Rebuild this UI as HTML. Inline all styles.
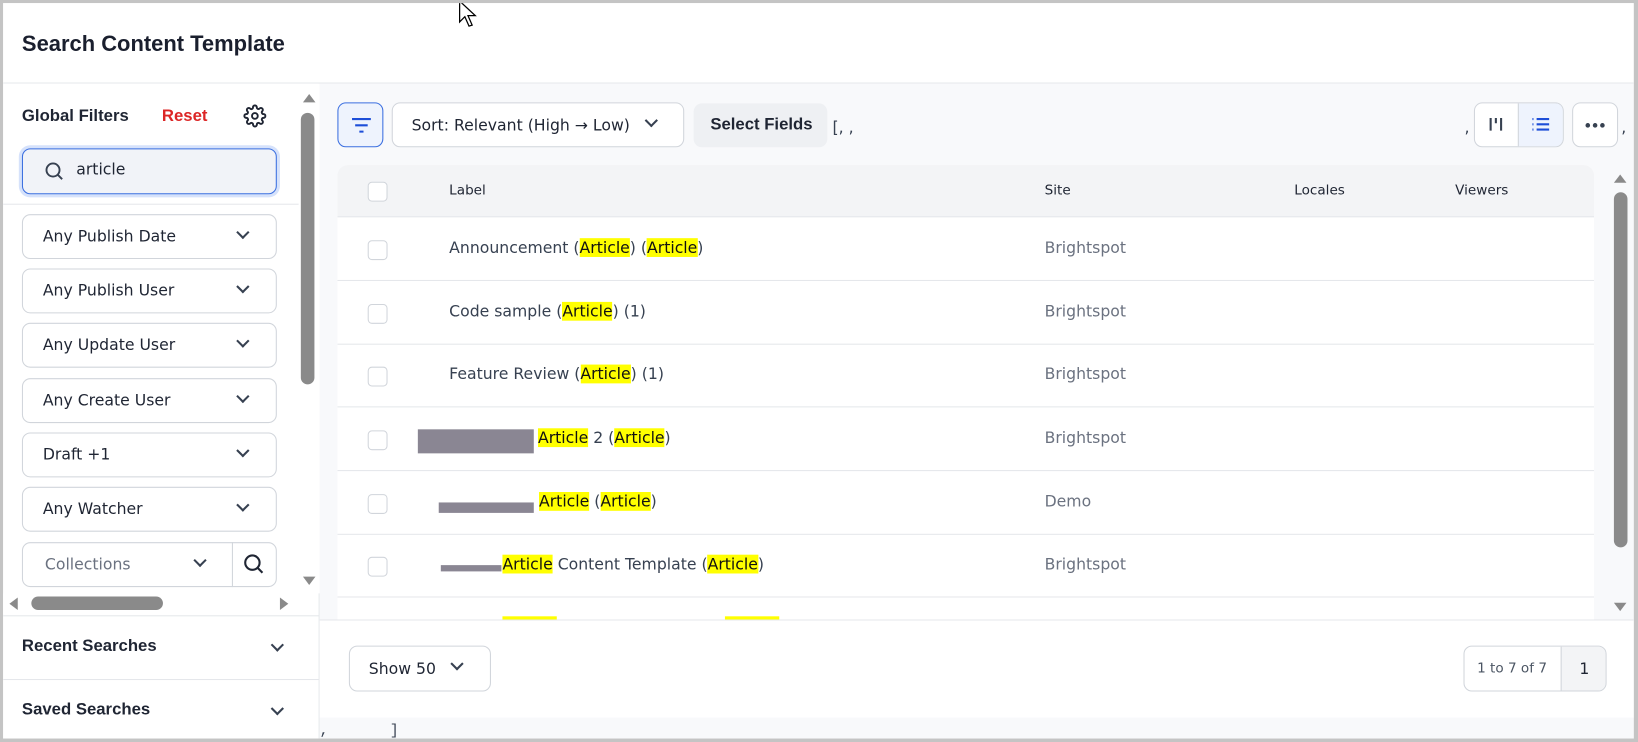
<!DOCTYPE html>
<html><head><meta charset="utf-8"><style>
*{box-sizing:border-box;margin:0;padding:0}
body{width:1638px;height:742px;background:#c4c4c4;font-family:"DejaVu Sans","Liberation Sans",sans-serif;color:#1f2533;position:relative;overflow:hidden}
.wrap{position:absolute;left:0;top:0;width:1568px;height:710px;transform:scale(1.0446);transform-origin:0 0}
.frame{position:absolute;left:3px;top:3px;width:1561px;height:704px;background:#fff;overflow:hidden}
.abs{position:absolute}
.b{font-family:"Liberation Sans",sans-serif;font-weight:bold;font-size:16px}
.hdr{left:0;top:0;width:100%;height:77px;border-bottom:1px solid #e5e7eb;background:#fff}
.hdr h1{position:absolute;left:18px;top:28px;font-size:21px;font-weight:bold;color:#1a1f2e;font-family:"Liberation Sans",sans-serif}
.side{left:0;top:77px;width:303px;height:627px;background:#fff;border-right:1px solid #e5e7eb}
.sel{position:absolute;left:18px;width:244px;height:43px;border:1px solid #d1d5db;border-radius:8px;font-size:15px;color:#1f2533;padding:11px 0 0 19px;background:#fff}
.chev{position:absolute;width:9px;height:9px;border-right:2px solid #374151;border-bottom:2px solid #374151;transform:rotate(45deg)}
.main{left:303px;top:77px;width:1258px;height:627px;background:#f8f9fb}
.btn{position:absolute;border:1px solid #d1d5db;border-radius:8px;background:#fff}
.card{left:320px;top:155px;width:1203px;height:435px;background:#fff;border-radius:10px 10px 0 0;overflow:hidden}
.th{position:absolute;left:0;top:0;width:100%;height:50px;background:#f3f4f6;border-bottom:1px solid #e5e7eb;font-size:13px;color:#1f2533}
.row{position:absolute;left:0;width:100%;height:61px;border-bottom:1px solid #e5e7eb;font-size:15px;color:#374151}
.cb{position:absolute;left:29px;width:19px;height:19px;border:1px solid #d1d5db;border-radius:4px;background:#fff}
.hl{background:#ffff00;color:#111}
.site{position:absolute;left:677px;top:20px;color:#6b7280;font-size:15px}
.lbl{position:absolute;top:20px}
.grey{position:absolute;background:#8a8693}
</style></head><body>
<div class="wrap">
<div class="frame">
<div class="abs hdr"><h1>Search Content Template</h1></div>
<svg class="abs" style="left:436px;top:-3px" width="20" height="28" viewBox="0 0 20 28"><path d="M1 1 L1 21 L6 16 L10 25 L13 24 L9 15 L16 15 Z" fill="#fff" stroke="#000" stroke-width="1.2"/></svg>

<div class="abs side">
 <div class="abs b" style="left:18px;top:23px">Global Filters</div>
 <div class="abs b" style="left:152px;top:23px;color:#dc2626">Reset</div>
 <svg class="abs" style="left:230px;top:20px" width="22" height="22" viewBox="0 0 24 24" fill="none" stroke="#1f2533" stroke-width="2"><circle cx="12" cy="12" r="3"/><path d="M19.4 15a1.650 1.650 0 0 0 .33 1.820l.06.06a2 2 0 1 1-2.830 2.830l-.06-.06a1.650 1.650 0 0 0-1.820-.33 1.650 1.650 0 0 0-1 1.510V21a2 2 0 1 1-4 0v-.09A1.650 1.650 0 0 0 9 19.4a1.650 1.650 0 0 0-1.820.33l-.06.06a2 2 0 1 1-2.830-2.830l.06-.06A1.650 1.650 0 0 0 4.680 15a1.650 1.650 0 0 0-1.510-1H3a2 2 0 1 1 0-4h.09A1.650 1.650 0 0 0 4.600 9a1.650 1.650 0 0 0-.33-1.820l-.06-.06a2 2 0 1 1 2.830-2.830l.06.06A1.650 1.650 0 0 0 9 4.680 1.650 1.650 0 0 0 10 3.170V3a2 2 0 1 1 4 0v.09a1.650 1.650 0 0 0 1 1.510 1.650 1.650 0 0 0 1.820-.33l.06-.06a2 2 0 1 1 2.830 2.830l-.06.06A1.650 1.650 0 0 0 19.4 9a1.650 1.650 0 0 0 1.510 1H21a2 2 0 1 1 0 4h-.09a1.650 1.650 0 0 0-1.510 1z"/></svg>
 <div class="abs" style="left:18px;top:62px;width:244px;height:44px;border:1px solid #3b6fe0;border-radius:8px;background:#f1f3f8;box-shadow:0 0 0 3px #d6e2fb"></div>
 <svg class="abs" style="left:39px;top:74px" width="20" height="20" viewBox="0 0 24 24" fill="none" stroke="#374151" stroke-width="2.2"><circle cx="10.5" cy="10.5" r="7.5"/><path d="M16 16l5 5"/></svg>
 <div class="abs" style="left:70px;top:73px;font-size:15px">article</div>
 <div class="abs" style="left:0;top:115px;width:283px;height:1px;background:#e5e7eb"></div>
 <div class="sel" style="top:125px">Any Publish Date<span class="chev" style="left:206px;top:12px"></span></div>
 <div class="sel" style="top:177px">Any Publish User<span class="chev" style="left:206px;top:12px"></span></div>
 <div class="sel" style="top:229px">Any Update User<span class="chev" style="left:206px;top:12px"></span></div>
 <div class="sel" style="top:282px">Any Create User<span class="chev" style="left:206px;top:12px"></span></div>
 <div class="sel" style="top:334px">Draft +1<span class="chev" style="left:206px;top:12px"></span></div>
 <div class="sel" style="top:386px">Any Watcher<span class="chev" style="left:206px;top:12px"></span></div>
 <div class="sel" style="top:439px;color:#6b7280;padding-left:21px">Collections<span class="chev" style="left:165px;top:12px"></span><span style="position:absolute;left:200px;top:-1px;width:1px;height:43px;background:#d1d5db"></span>
  <svg style="position:absolute;left:210px;top:9px" width="22" height="22" viewBox="0 0 24 24" fill="none" stroke="#1f2533" stroke-width="2.2"><circle cx="10.5" cy="10.5" r="7.5"/><path d="M16 16l5 5"/></svg></div>
 <div class="abs" style="left:283px;top:0;width:20px;height:488px;background:#fff"></div>
 <div class="abs" style="left:287px;top:10px;width:0;height:0;border-left:6px solid transparent;border-right:6px solid transparent;border-bottom:8px solid #8a8a8a"></div>
 <div class="abs" style="left:285px;top:28px;width:13px;height:260px;background:#8a8a8a;border-radius:7px"></div>
 <div class="abs" style="left:287px;top:472px;width:0;height:0;border-left:6px solid transparent;border-right:6px solid transparent;border-top:8px solid #8a8a8a"></div>
 <div class="abs" style="left:0;top:488px;width:283px;height:20px;background:#fff"></div>
 <div class="abs" style="left:6px;top:492px;width:0;height:0;border-top:6px solid transparent;border-bottom:6px solid transparent;border-right:8px solid #8a8a8a"></div>
 <div class="abs" style="left:27px;top:491px;width:126px;height:13px;background:#8a8a8a;border-radius:7px"></div>
 <div class="abs" style="left:265px;top:492px;width:0;height:0;border-top:6px solid transparent;border-bottom:6px solid transparent;border-left:8px solid #8a8a8a"></div>
 <div class="abs" style="left:0;top:509px;width:303px;height:1px;background:#e5e7eb"></div>
 <div class="abs b" style="left:18px;top:530px">Recent Searches</div>
 <span class="chev abs" style="left:258px;top:533px"></span>
 <div class="abs" style="left:0;top:570px;width:303px;height:1px;background:#e5e7eb"></div>
 <div class="abs b" style="left:18px;top:591px">Saved Searches</div>
 <span class="chev abs" style="left:258px;top:594px"></span>
</div>

<div class="abs main">
 <div class="btn" style="left:17px;top:18px;width:44px;height:43px;border-color:#3b6fe0;background:#eef3fd"></div>
 <svg class="abs" style="left:30px;top:32px" width="20" height="16" viewBox="0 0 20 16" stroke="#1d4ed8" stroke-width="2"><path d="M1 2h18M4 8h12M8 14h4"/></svg>
 <div class="btn" style="left:69px;top:18px;width:280px;height:43px;font-size:15px;padding:12px 0 0 18px">Sort: Relevant (High → Low)<span class="chev" style="left:243px;top:12px"></span></div>
 <div class="abs b" style="left:358px;top:19px;width:128px;height:42px;background:#eef0f3;border-radius:8px;padding:12px 0 0 16px;color:#1f2533">Select Fields</div>
 <div class="abs" style="left:491px;top:33px;font-size:15px;color:#374151">[, ,</div>
 <div class="abs" style="left:1096px;top:33px;font-size:15px;color:#374151">,</div>
 <div class="btn" style="left:1105px;top:18px;width:86px;height:43px;overflow:hidden"><div style="position:absolute;left:41px;top:0;width:44px;height:43px;background:#eef3fd;border-left:1px solid #d1d5db"></div></div>
 <svg class="abs" style="left:1118px;top:31px" width="16" height="16" viewBox="0 0 16 16" stroke="#374151" stroke-width="2"><path d="M3 2v12M8 2v5M13 2v12"/></svg>
 <svg class="abs" style="left:1160px;top:31px" width="18" height="16" viewBox="0 0 18 16" stroke="#1d4ed8" stroke-width="2"><path d="M1 3h1M5 3h12M1 8h1M5 8h12M1 13h1M5 13h12"/></svg>
 <div class="btn" style="left:1199px;top:18px;width:44px;height:43px"></div>
 <svg class="abs" style="left:1211px;top:37px" width="20" height="6" viewBox="0 0 20 6" fill="#374151"><circle cx="3" cy="3" r="2.2"/><circle cx="10" cy="3" r="2.2"/><circle cx="17" cy="3" r="2.2"/></svg>
 <div class="abs" style="left:1246px;top:33px;font-size:15px;color:#374151">,</div>
 <div class="abs" style="left:1239px;top:87px;width:0;height:0;border-left:6px solid transparent;border-right:6px solid transparent;border-bottom:8px solid #8a8a8a"></div>
 <div class="abs" style="left:1239px;top:104px;width:13px;height:340px;background:#8a8a8a;border-radius:7px"></div>
 <div class="abs" style="left:1239px;top:497px;width:0;height:0;border-left:6px solid transparent;border-right:6px solid transparent;border-top:8px solid #8a8a8a"></div>
 <div class="abs" style="left:0;top:513px;width:1258px;height:94px;background:#fff;border-top:1px solid #e5e7eb"></div>
 <div class="btn" style="left:28px;top:538px;width:136px;height:44px;font-size:15px;padding:12px 0 0 18px">Show 50<span class="chev" style="left:98px;top:12px"></span></div>
 <div class="btn" style="left:1095px;top:538px;width:137px;height:44px;overflow:hidden;font-size:13px;color:#4b5563"><span style="position:absolute;left:12px;top:14px">1 to 7 of 7</span><div style="position:absolute;left:92px;top:0;width:45px;height:44px;background:#f3f4f6;border-left:1px solid #d1d5db;font-size:15px;color:#1f2533;padding:12px 0 0 17px">1</div></div>
 <div class="abs" style="left:0;top:612px;font-size:14px;color:#374151;font-family:'Liberation Mono',monospace">,&nbsp;&nbsp;&nbsp;&nbsp;&nbsp;&nbsp;&nbsp;]</div>
</div>

<div class="abs card">
 <div class="th"><span class="cb" style="top:16px"></span>
  <span class="abs" style="left:107px;top:17px">Label</span><span class="abs" style="left:677px;top:17px">Site</span><span class="abs" style="left:916px;top:17px">Locales</span><span class="abs" style="left:1070px;top:17px">Viewers</span></div>
 <div class="row" style="top:50px"><span class="cb" style="top:22px"></span><span class="lbl" style="left:107px">Announcement (<span class="hl">Article</span>) (<span class="hl">Article</span>)</span><span class="site">Brightspot</span></div>
 <div class="row" style="top:111px"><span class="cb" style="top:22px"></span><span class="lbl" style="left:107px">Code sample (<span class="hl">Article</span>) (1)</span><span class="site">Brightspot</span></div>
 <div class="row" style="top:171px"><span class="cb" style="top:22px"></span><span class="lbl" style="left:107px">Feature Review (<span class="hl">Article</span>) (1)</span><span class="site">Brightspot</span></div>
 <div class="row" style="top:232px"><span class="cb" style="top:22px"></span><span class="grey" style="left:77px;top:21px;width:111px;height:23px"></span><span class="lbl" style="left:192px"><span class="hl">Article</span> 2 (<span class="hl">Article</span>)</span><span class="site">Brightspot</span></div>
 <div class="row" style="top:293px"><span class="cb" style="top:22px"></span><span class="grey" style="left:97px;top:30px;width:91px;height:10px"></span><span class="lbl" style="left:193px"><span class="hl">Article</span> (<span class="hl">Article</span>)</span><span class="site">Demo</span></div>
 <div class="row" style="top:353px"><span class="cb" style="top:22px"></span><span class="grey" style="left:99px;top:30px;width:58px;height:6px"></span><span class="lbl" style="left:158px"><span class="hl">Article</span> Content Template (<span class="hl">Article</span>)</span><span class="site">Brightspot</span></div>
 <div class="row" style="top:414px;border:none"><span class="hl abs" style="left:158px;top:18px;width:52px;height:5px"></span><span class="hl abs" style="left:371px;top:18px;width:52px;height:5px"></span></div>
</div>
</div>
</div>
</body></html>
